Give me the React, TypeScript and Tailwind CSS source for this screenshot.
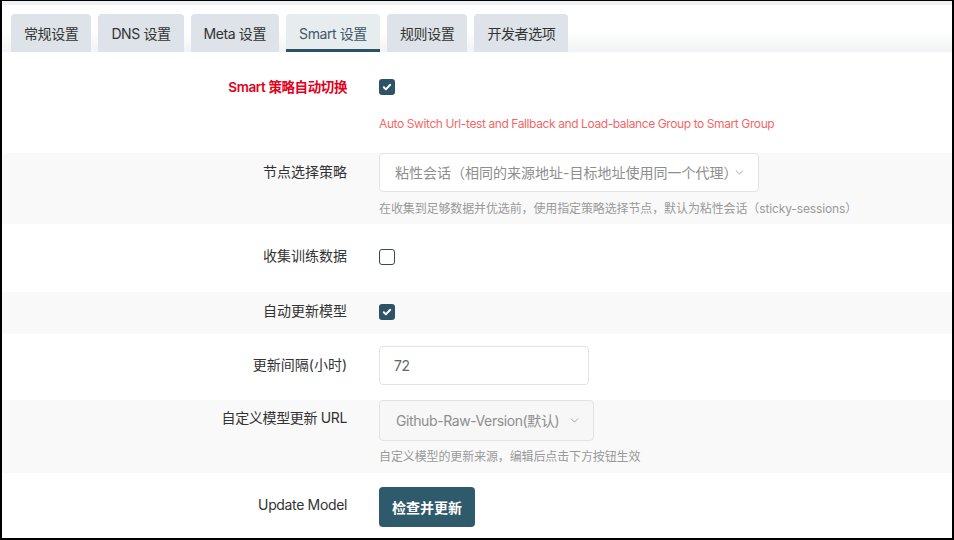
import { ChevronDown } from "lucide-react";

const font = {
  fontFamily: '"Inter", "Noto Sans CJK SC", sans-serif',
};

const tabs = ["常规设置", "DNS 设置", "Meta 设置", "Smart 设置", "规则设置", "开发者选项"];

const Checkbox = ({ checked }: { checked?: boolean }) =>
  checked ? (
    <span className="w-4 h-4 rounded-[3px] bg-[#2e5366] flex items-center justify-center">
      <svg width="12" height="12" viewBox="0 0 12 12" fill="none">
        <path d="M2.8 6.3l2.1 2.1 4.3-4.6" stroke="#fff" strokeWidth="2" strokeLinecap="round" strokeLinejoin="round" />
      </svg>
    </span>
  ) : (
    <span className="w-4 h-4 rounded-[3px] border-[1.5px] border-[#2e4b57] bg-white" />
  );

const Label = ({ children, pt, tight }: { children: React.ReactNode; pt: string; tight?: boolean }) => (
  <div
    className={`w-[345px] shrink-0 text-right text-[14px] leading-5 text-[#333] ${pt} ${
      tight ? "tracking-[-0.025em]" : "tracking-normal"
    }`}
  >
    {children}
  </div>
);

const Help = ({ children }: { children: React.ReactNode }) => (
  <div className="text-[12px] leading-[18px] text-[#999] tracking-[-0.01em]">{children}</div>
);

export default function App() {
  return (
    <div
      className="w-[954px] h-[540px] overflow-hidden bg-white border-black border-t border-l-2 border-r-2 border-b-2 tracking-[-0.025em]"
      style={font}
    >
      <div className="h-1 bg-[#eff1f3]" />

      {/* tabs */}
      <div className="flex gap-[7px] pl-[9px] pt-[9px] bg-[linear-gradient(to_bottom,#fff_55%,#f1f3f4)]">
        {tabs.map((t) =>
          t === "Smart 设置" ? (
            <div
              key={t}
              className="h-[38px] px-[13px] flex items-center rounded-t-[4px] bg-[#e7ecef] text-[#3f5868] text-[14px] border-b-[3px] border-[#2c5364] pt-[3px]"
            >
              {t}
            </div>
          ) : (
            <div
              key={t}
              className="h-[38px] px-[13px] flex items-center rounded-t-[4px] bg-[#dde3e8] text-[#333] text-[14px]"
            >
              {t}
            </div>
          )
        )}
      </div>

      {/* Smart auto switch */}
      <div className="flex h-[101px]">
        <div className="w-[345px] shrink-0 text-right pt-[25px] leading-5 text-[13.5px] font-semibold text-[#e3001b]">
          Smart 策略自动切换
        </div>
        <div className="ml-8 pt-[25px]">
          <div className="h-5 flex items-center">
            <Checkbox checked />
          </div>
          <div className="mt-[18px] text-[12px] leading-[18px] text-[#f26868]">
            Auto Switch Url-test and Fallback and Load-balance Group to Smart Group
          </div>
        </div>
      </div>

      {/* node strategy */}
      <div className="flex h-[71px] bg-[#f9f9f9]">
        <Label pt="pt-[9px]">节点选择策略</Label>
        <div className="ml-8">
          <div className="w-[380px] h-[39px] bg-white border border-[#e3e3e3] rounded-[4px] flex items-center justify-between pl-[15px] pr-[12px] text-[14px] text-[#8e8e8e] tracking-normal">
            <span>粘性会话（相同的来源地址-目标地址使用同一个代理）</span>
            <ChevronDown size={13} strokeWidth={1.6} color="#999" />
          </div>
          <div className="mt-2">
            <Help>在收集到足够数据并优选前，使用指定策略选择节点，默认为粘性会话（sticky-sessions）</Help>
          </div>
        </div>
      </div>

      {/* collect data */}
      <div className="flex h-[68px]">
        <Label pt="pt-[22px]">收集训练数据</Label>
        <div className="ml-8 pt-[23px] h-5 box-content flex items-center">
          <Checkbox />
        </div>
      </div>

      {/* auto update */}
      <div className="flex h-[42px] bg-[#f9f9f9]">
        <Label pt="pt-[9px]">自动更新模型</Label>
        <div className="ml-8 pt-[10px] h-5 box-content flex items-center">
          <Checkbox checked />
        </div>
      </div>

      {/* interval */}
      <div className="flex h-[66px]">
        <Label pt="pt-[21px]">更新间隔(小时)</Label>
        <div className="ml-8 pt-3">
          <div className="w-[210px] h-[39px] bg-white border border-[#e3e3e3] rounded-[4px] flex items-center pl-[14px] text-[14px] text-[#666]">
            72
          </div>
        </div>
      </div>

      {/* model url */}
      <div className="flex h-[73px] bg-[#f9f9f9]">
        <Label pt="pt-[8px]" tight>
          自定义模型更新 URL
        </Label>
        <div className="ml-8">
          <div className="w-[215px] h-[41px] bg-[#f7f7f7] border border-[#e3e3e3] rounded-[4px] flex items-center justify-between pl-4 pr-[12px] text-[14px] text-[#8e8e8e]">
            <span>Github-Raw-Version(默认)</span>
            <ChevronDown size={13} strokeWidth={1.6} color="#999" />
          </div>
          <div className="mt-[7px]">
            <Help>自定义模型的更新来源，编辑后点击下方按钮生效</Help>
          </div>
        </div>
      </div>

      {/* update model */}
      <div className="flex">
        <Label pt="pt-[22px]" tight>
          Update Model
        </Label>
        <div className="ml-8 pt-[14px]">
          <button className="h-10 w-[96px] rounded-[4px] bg-[#2f5a6b] text-white text-[14px] font-semibold tracking-normal">
            检查并更新
          </button>
        </div>
      </div>
    </div>
  );
}
